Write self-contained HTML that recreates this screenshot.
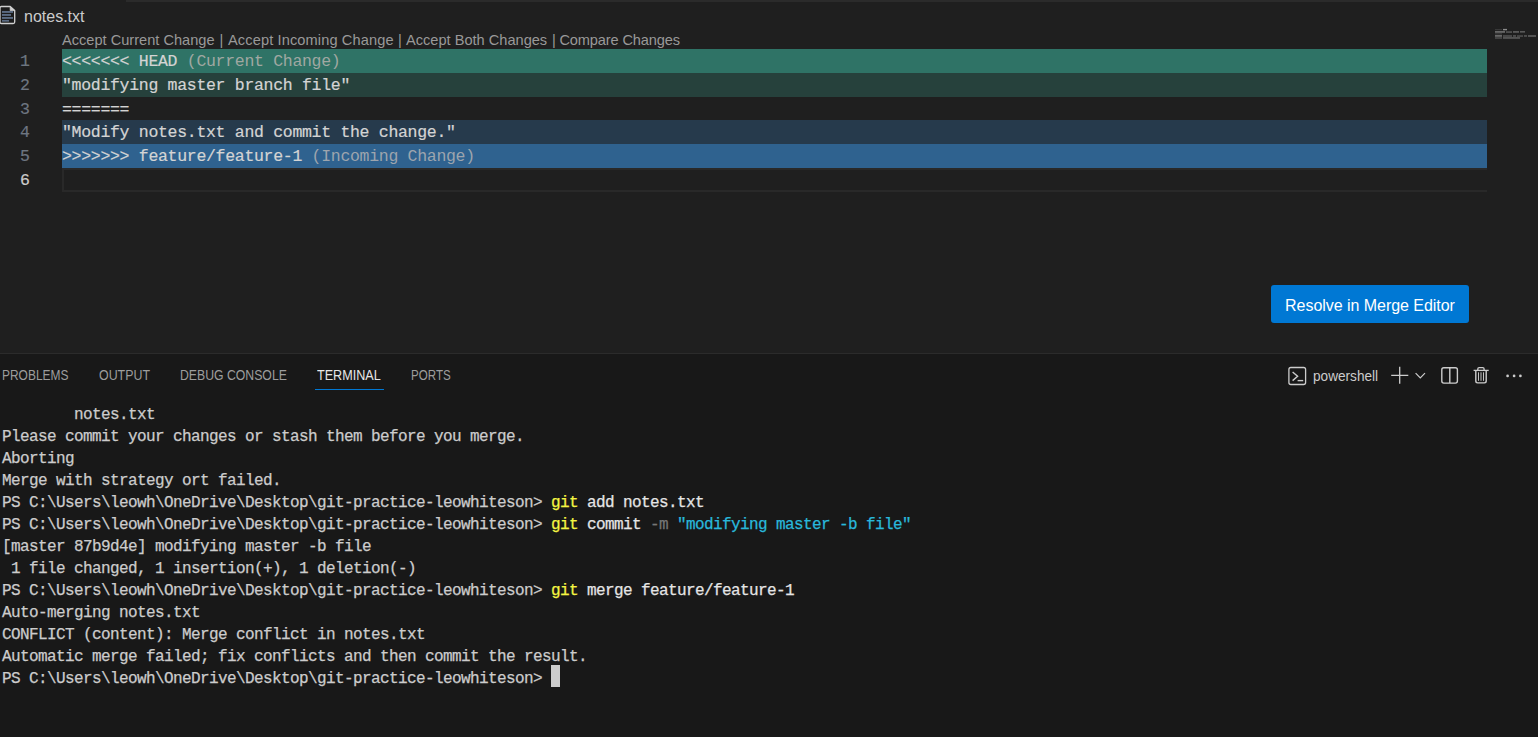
<!DOCTYPE html>
<html>
<head>
<meta charset="utf-8">
<title>notes.txt</title>
<style>
html,body{margin:0;padding:0;}
body{width:1538px;height:737px;overflow:hidden;background:#1f1f1f;position:relative;font-family:"Liberation Sans",sans-serif;}
.abs{position:absolute;}
.sans{font-family:"Liberation Sans",sans-serif;white-space:pre;}
.mono{font-family:"Liberation Mono",monospace;white-space:pre;}
/* editor */
#topbar{left:126px;top:0;width:1412px;height:2px;background:#2b2b2b;}
#fname{left:24px;top:7px;font-size:16px;line-height:19px;color:#cccccc;}
.lens{top:31px;font-size:14.6px;line-height:19px;color:#999999;}
.band{left:62px;width:1425px;}
.ln{left:0;width:30px;text-align:right;font-size:16.5px;line-height:24px;color:#6e7681;-webkit-text-stroke:0.2px currentColor;}
.code{left:62px;font-size:16.5px;letter-spacing:-0.3016px;line-height:24px;color:#d4d4d4;-webkit-text-stroke:0.2px currentColor;}
.dim{color:#a0a8a2;-webkit-text-stroke:0;}
/* panel */
#panel{left:0;top:353px;width:1538px;height:384px;background:#181818;border-top:1px solid #2b2b2b;box-sizing:border-box;}
.tab{transform-origin:0 0;top:366px;font-size:14px;line-height:18px;color:#9d9d9d;}
.term{left:2px;font-size:16px;letter-spacing:-0.6016px;line-height:22px;color:#cccccc;-webkit-text-stroke:0.25px currentColor;}
.y{color:#f5f543;}
.w{color:#e5e5e5;}
.g{color:#767676;}
.c{color:#29b8db;}
</style>
</head>
<body>
<!-- editor top -->
<div class="abs" id="topbar"></div>
<div class="abs sans" id="fname">notes.txt</div>

<!-- codelens -->
<div class="abs sans lens" style="left:62px">Accept Current Change</div>
<div class="abs sans lens" style="left:219.5px">|</div>
<div class="abs sans lens" style="left:228px;letter-spacing:0.12px">Accept Incoming Change</div>
<div class="abs sans lens" style="left:398px">|</div>
<div class="abs sans lens" style="left:406px">Accept Both Changes</div>
<div class="abs sans lens" style="left:552px">|</div>
<div class="abs sans lens" style="left:559.4px;letter-spacing:-0.13px">Compare Changes</div>

<!-- conflict bands -->
<div class="abs band" style="top:49px;height:24px;background:#2f7366"></div>
<div class="abs band" style="top:73px;height:24px;background:#26413c"></div>
<div class="abs band" style="top:120px;height:24px;background:#263a4c"></div>
<div class="abs band" style="top:144px;height:24px;background:#2f628f"></div>
<div class="abs band" style="top:168px;height:24px;box-sizing:border-box;border:2px solid #292929;border-right:none"></div>

<!-- line numbers -->
<div class="abs mono ln" style="top:50px">1</div>
<div class="abs mono ln" style="top:74px">2</div>
<div class="abs mono ln" style="top:98px">3</div>
<div class="abs mono ln" style="top:121px">4</div>
<div class="abs mono ln" style="top:145px">5</div>
<div class="abs mono ln" style="top:169px;color:#cccccc">6</div>

<!-- code -->
<div class="abs mono code" style="top:50px">&lt;&lt;&lt;&lt;&lt;&lt;&lt; HEAD<span class="dim"> (Current Change)</span></div>
<div class="abs mono code" style="top:74px">"modifying master branch file"</div>
<div class="abs mono code" style="top:98px">=======</div>
<div class="abs mono code" style="top:121px">"Modify notes.txt and commit the change."</div>
<div class="abs mono code" style="top:145px">&gt;&gt;&gt;&gt;&gt;&gt;&gt; feature/feature-1<span class="dim" style="color:#9da5ae"> (Incoming Change)</span></div>

<!-- button -->
<div class="abs sans" style="left:1271px;top:285px;width:198px;height:38px;background:#0078d4;border-radius:3px;color:#ffffff;font-size:16px;letter-spacing:-0.04px;line-height:38px;text-align:center;box-sizing:border-box;padding-top:2px">Resolve in Merge Editor</div>

<!-- panel -->
<div class="abs" id="panel"></div>
<div class="abs sans tab" style="left:2px;transform:scaleX(0.854)">PROBLEMS</div>
<div class="abs sans tab" style="left:98.5px;transform:scaleX(0.886)">OUTPUT</div>
<div class="abs sans tab" style="left:180px;transform:scaleX(0.875)">DEBUG CONSOLE</div>
<div class="abs sans tab" style="left:317.3px;color:#e7e7e7;transform:scaleX(0.90)">TERMINAL</div>
<div class="abs" style="left:315px;top:389px;width:69px;height:1px;background:#0078d4"></div>
<div class="abs sans tab" style="left:411.3px;transform:scaleX(0.827)">PORTS</div>


<!-- file icon -->
<svg class="abs" style="left:0;top:5px" width="17" height="20" viewBox="0 0 17 20">
  <path d="M1.3 1.5 H10.2 L14.7 5.6 V17 Q14.7 18.5 13.2 18.5 H1.3 Q0 18.5 0 17 V3 Q0 1.5 1.3 1.5 Z" fill="#1c1c1c" stroke="#d0d0d0" stroke-width="1.3" stroke-linejoin="round"/>
  <path d="M10.2 1.5 V5.6 H14.7" fill="#d0d0d0" stroke="#d0d0d0" stroke-width="0.8"/>
  <rect x="2" y="6.1" width="11" height="1.7" fill="#62748e"/>
  <rect x="2" y="9.1" width="9" height="1.7" fill="#62748e"/>
  <rect x="2" y="12.1" width="11" height="1.7" fill="#62748e"/>
  <rect x="2" y="15.1" width="7" height="1.5" fill="#62748e"/>
</svg>

<!-- minimap -->
<svg class="abs" style="left:1494px;top:28px" width="44" height="12" viewBox="0 0 44 12">
  <g fill="#d4d4d4">
    <rect x="1" y="1.2" width="7" height="1" opacity="0.18"/>
    <rect x="9" y="0.9" width="4" height="1.4" opacity="0.60"/>
    <rect x="1" y="3" width="10" height="1.8" opacity="0.40"/>
    <rect x="12" y="3.3" width="6" height="1.5" opacity="0.32"/>
    <rect x="19" y="3" width="6" height="1.8" opacity="0.32"/>
    <rect x="26" y="3" width="5" height="1.6" opacity="0.32"/>
    <rect x="1" y="5.3" width="7" height="1" opacity="0.18"/>
    <rect x="1" y="6.9" width="7" height="1.9" opacity="0.40"/>
    <rect x="9" y="7.2" width="9" height="1.6" opacity="0.28"/>
    <rect x="19" y="7.1" width="3" height="1.7" opacity="0.28"/>
    <rect x="23" y="7.3" width="6" height="1.5" opacity="0.28"/>
    <rect x="30" y="7.1" width="3" height="1.7" opacity="0.28"/>
    <rect x="34" y="7.1" width="8" height="1.8" opacity="0.32"/>
    <rect x="1" y="9.2" width="7" height="1.6" opacity="0.24"/>
    <rect x="9" y="9.1" width="17" height="1.7" opacity="0.32"/>
  </g>
</svg>

<!-- terminal toolbar -->
<svg class="abs" style="left:1284px;top:362px" width="250" height="28" viewBox="0 0 250 28">
  <g fill="none" stroke="#cccccc" stroke-width="1.3" stroke-linecap="butt" stroke-linejoin="miter">
    <!-- terminal box -->
    <rect x="4.9" y="5.5" width="16.7" height="17" rx="2" ry="2"/>
    <path d="M8.6 10 L13.6 14.3 L8.6 18.6" stroke-width="1.4"/>
    <path d="M13.6 18.6 H19.2" stroke-width="1.4"/>
    <!-- plus -->
    <path d="M107.2 13.4 H124.3 M115.7 4.8 V21.8" stroke-width="1.3"/>
    <!-- chevron -->
    <path d="M131.6 11.1 L136.3 15.9 L141 11.1" stroke-width="1.2"/>
    <!-- split -->
    <rect x="157.8" y="5.7" width="15.6" height="15.4" rx="2" ry="2" stroke-width="1.4"/>
    <path d="M165.8 5.7 V21.1" stroke-width="1.4"/>
    <!-- trash -->
    <path d="M189.6 8.4 H204.7" stroke-width="1.3"/>
    <path d="M193.8 8.2 V6.9 Q193.8 5.6 195.1 5.6 H198.8 Q200.1 5.6 200.1 6.9 V8.2" stroke-width="1.3"/>
    <path d="M191.8 8.6 V19.1 Q191.8 20.9 193.6 20.9 H200.4 Q202.2 20.9 202.2 19.1 V8.6" stroke-width="1.4"/>
    <path d="M194.5 10.3 V18.8 M197 10.3 V18.8 M199.5 10.3 V18.8" stroke-width="0.95"/>
  </g>
  <g fill="#cccccc">
    <circle cx="223.6" cy="13.9" r="1.35"/>
    <circle cx="230.1" cy="13.9" r="1.35"/>
    <circle cx="236.4" cy="13.9" r="1.35"/>
  </g>
</svg>
<div class="abs sans" style="left:1312.5px;top:367px;font-size:15px;line-height:18px;color:#cccccc;transform-origin:0 0;transform:scaleX(0.908)" id="pshell">powershell</div>

<!-- terminal lines -->
<div class="abs mono term" style="top:404px">        notes.txt</div>
<div class="abs mono term" style="top:426px">Please commit your changes or stash them before you merge.</div>
<div class="abs mono term" style="top:448px">Aborting</div>
<div class="abs mono term" style="top:470px">Merge with strategy ort failed.</div>
<div class="abs mono term" style="top:492px">PS C:\Users\leowh\OneDrive\Desktop\git-practice-leowhiteson&gt; <span class="y">git</span><span class="w"> add notes.txt</span></div>
<div class="abs mono term" style="top:514px">PS C:\Users\leowh\OneDrive\Desktop\git-practice-leowhiteson&gt; <span class="y">git</span><span class="w"> commit </span><span class="g">-m</span> <span class="c">"modifying master -b file"</span></div>
<div class="abs mono term" style="top:536px">[master 87b9d4e] modifying master -b file</div>
<div class="abs mono term" style="top:558px"> 1 file changed, 1 insertion(+), 1 deletion(-)</div>
<div class="abs mono term" style="top:580px">PS C:\Users\leowh\OneDrive\Desktop\git-practice-leowhiteson&gt; <span class="y">git</span><span class="w"> merge feature/feature-1</span></div>
<div class="abs mono term" style="top:602px">Auto-merging notes.txt</div>
<div class="abs mono term" style="top:624px">CONFLICT (content): Merge conflict in notes.txt</div>
<div class="abs mono term" style="top:646px">Automatic merge failed; fix conflicts and then commit the result.</div>
<div class="abs mono term" style="top:668px">PS C:\Users\leowh\OneDrive\Desktop\git-practice-leowhiteson&gt; </div>
<div class="abs" style="left:551px;top:665px;width:9px;height:22px;background:#cccccc"></div>
</body>
</html>
